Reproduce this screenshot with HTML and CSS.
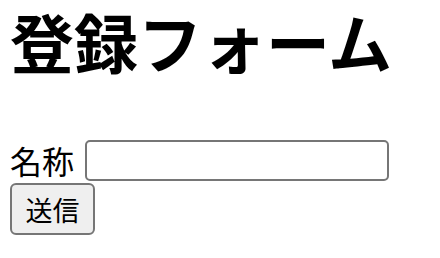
FILE: index.html
```html
<!DOCTYPE html>
<html lang="ja">
<head>
<meta charset="utf-8">
<link rel="stylesheet" href="styles.css">
</head>
<body>
<h1 class="title">登録フォーム</h1>
<form class="form">
  <div class="row">
    <label class="label" for="name">名称</label>
    <input class="field" id="name" type="text">
  </div>
  <button class="submit" type="button">送信</button>
</form>
</body>
</html>
```
FILE: styles.css
```css
html, body {
  background: #ffffff;
}
body {
  margin: 0 10px;
  font-family: "Noto Sans CJK JP", sans-serif;
  font-size: 32px;
  color: #000000;
}
.title {
  font-size: 64px;
  font-weight: 700;
  line-height: 80px;
  margin: 0;
}
.form {
  margin: 0;
  padding-top: 60px;
}
.row {
  display: flex;
  align-items: center;
  gap: 11px;
  height: 41px;
}
.label {
  line-height: 41px;
}
.field {
  box-sizing: border-box;
  width: 304px;
  height: 41px;
  margin: 0;
  border: 2px solid #767676;
  border-radius: 5px;
  background: #ffffff;
  font-family: inherit;
  font-size: 26px;
  padding: 0 4px;
}
.submit {
  display: block;
  box-sizing: border-box;
  width: 85px;
  height: 52px;
  margin: 2px 0 0;
  padding: 0;
  border: 2px solid #767676;
  border-radius: 6px;
  background: #efefef;
  font-family: inherit;
  font-size: 27px;
  color: #000000;
}
```
